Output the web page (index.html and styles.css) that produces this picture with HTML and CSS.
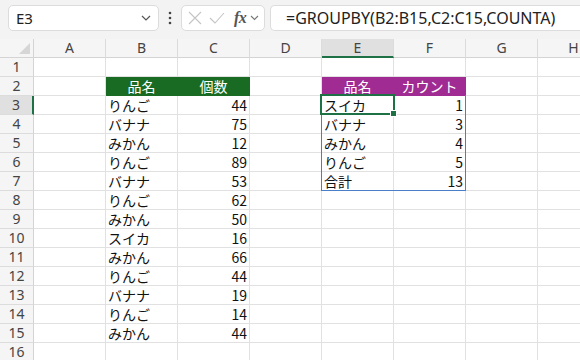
FILE: index.html
```html
<!DOCTYPE html>
<html lang="ja">
<head>
<meta charset="utf-8">
<link rel="stylesheet" href="styles.css">
</head>
<body>
<div class="app">
  <div class="toolbar">
    <div class="namebox"><span>E3</span>
      <svg class="chev" width="10" height="6" viewBox="0 0 10 6"><path d="M1 1 L5 5 L9 1" fill="none" stroke="#555" stroke-width="1.2"/></svg>
    </div>
    <div class="dots">
      <svg width="4" height="14" viewBox="0 0 4 14"><circle cx="2" cy="2" r="1.3" fill="#444"/><circle cx="2" cy="7" r="1.3" fill="#444"/><circle cx="2" cy="12" r="1.3" fill="#444"/></svg>
    </div>
    <div class="fbtns">
      <svg class="ic" width="14" height="14" viewBox="0 0 14 14"><path d="M1 1 L13 13 M13 1 L1 13" stroke="#c4c4c4" stroke-width="1.1" fill="none"/></svg>
      <svg class="ic" width="16" height="14" viewBox="0 0 16 14"><path d="M1 7 L6 12 L15 2" stroke="#c4c4c4" stroke-width="1.1" fill="none"/></svg>
      <span class="fx">fx</span>
      <svg class="chev2" width="9" height="6" viewBox="0 0 9 6"><path d="M1 1 L4.5 4.5 L8 1" fill="none" stroke="#777" stroke-width="1.1"/></svg>
    </div>
    <div class="formula">=GROUPBY(B2:B15,C2:C15,COUNTA)</div>
  </div>

  <div class="sheet">
    <div class="row hdr">
      <div class="rh corner"><span class="tri"></span></div>
      <div class="ch">A</div><div class="ch">B</div><div class="ch">C</div><div class="ch">D</div>
      <div class="ch sel">E</div><div class="ch">F</div><div class="ch">G</div><div class="ch">H</div>
    </div>
    <div class="row"><div class="rh">1</div><div class="c"></div><div class="c"></div><div class="c"></div><div class="c"></div><div class="c"></div><div class="c"></div><div class="c"></div><div class="c"></div></div>
    <div class="row"><div class="rh">2</div><div class="c"></div><div class="c g ctr">品名</div><div class="c g ctr">個数</div><div class="c"></div><div class="c p ctr">品名</div><div class="c p ctr">カウント</div><div class="c"></div><div class="c"></div></div>
    <div class="row"><div class="rh rsel">3</div><div class="c"></div><div class="c">りんご</div><div class="c n">44</div><div class="c"></div><div class="c">スイカ</div><div class="c n">1</div><div class="c"></div><div class="c"></div></div>
    <div class="row"><div class="rh">4</div><div class="c"></div><div class="c">バナナ</div><div class="c n">75</div><div class="c"></div><div class="c">バナナ</div><div class="c n">3</div><div class="c"></div><div class="c"></div></div>
    <div class="row"><div class="rh">5</div><div class="c"></div><div class="c">みかん</div><div class="c n">12</div><div class="c"></div><div class="c">みかん</div><div class="c n">4</div><div class="c"></div><div class="c"></div></div>
    <div class="row"><div class="rh">6</div><div class="c"></div><div class="c">りんご</div><div class="c n">89</div><div class="c"></div><div class="c">りんご</div><div class="c n">5</div><div class="c"></div><div class="c"></div></div>
    <div class="row"><div class="rh">7</div><div class="c"></div><div class="c">バナナ</div><div class="c n">53</div><div class="c"></div><div class="c">合計</div><div class="c n">13</div><div class="c"></div><div class="c"></div></div>
    <div class="row"><div class="rh">8</div><div class="c"></div><div class="c">りんご</div><div class="c n">62</div><div class="c"></div><div class="c"></div><div class="c"></div><div class="c"></div><div class="c"></div></div>
    <div class="row"><div class="rh">9</div><div class="c"></div><div class="c">みかん</div><div class="c n">50</div><div class="c"></div><div class="c"></div><div class="c"></div><div class="c"></div><div class="c"></div></div>
    <div class="row"><div class="rh">10</div><div class="c"></div><div class="c">スイカ</div><div class="c n">16</div><div class="c"></div><div class="c"></div><div class="c"></div><div class="c"></div><div class="c"></div></div>
    <div class="row"><div class="rh">11</div><div class="c"></div><div class="c">みかん</div><div class="c n">66</div><div class="c"></div><div class="c"></div><div class="c"></div><div class="c"></div><div class="c"></div></div>
    <div class="row"><div class="rh">12</div><div class="c"></div><div class="c">りんご</div><div class="c n">44</div><div class="c"></div><div class="c"></div><div class="c"></div><div class="c"></div><div class="c"></div></div>
    <div class="row"><div class="rh">13</div><div class="c"></div><div class="c">バナナ</div><div class="c n">19</div><div class="c"></div><div class="c"></div><div class="c"></div><div class="c"></div><div class="c"></div></div>
    <div class="row"><div class="rh">14</div><div class="c"></div><div class="c">りんご</div><div class="c n">14</div><div class="c"></div><div class="c"></div><div class="c"></div><div class="c"></div><div class="c"></div></div>
    <div class="row"><div class="rh">15</div><div class="c"></div><div class="c">みかん</div><div class="c n">44</div><div class="c"></div><div class="c"></div><div class="c"></div><div class="c"></div><div class="c"></div></div>
    <div class="row"><div class="rh">16</div><div class="c"></div><div class="c"></div><div class="c"></div><div class="c"></div><div class="c"></div><div class="c"></div><div class="c"></div><div class="c"></div></div>

    <div class="spill"></div>
    <div class="cursor"><span class="handle"></span></div>
  </div>
</div>
</body>
</html>
```

FILE: styles.css
```css
html, body {
  margin: 0;
  padding: 0;
  background: #ffffff;
}
.app {
  width: 580px;
  height: 360px;
  overflow: hidden;
  font-family: "Noto Sans", "Noto Sans CJK JP", sans-serif;
  color: #222;
}
.toolbar {
  height: 39px;
  box-sizing: border-box;
  background: #f3f3f3;
  display: flex;
  align-items: flex-start;
  padding: 5px 0 0 8px;
  white-space: nowrap;
}
.namebox {
  width: 151px;
  height: 26px;
  box-sizing: border-box;
  background: #fff;
  border: 1px solid #dcdcdc;
  border-radius: 5px;
  display: flex;
  align-items: center;
  justify-content: space-between;
  padding: 0 7px 0 7px;
  font-size: 15px;
  color: #222;
}
.dots {
  width: 22px;
  height: 26px;
  display: flex;
  align-items: center;
  justify-content: center;
}
.fbtns {
  width: 84px;
  height: 26px;
  box-sizing: border-box;
  background: #fff;
  border: 1px solid #dcdcdc;
  border-radius: 5px;
  display: flex;
  align-items: center;
  padding: 0 0 0 6px;
  gap: 7px;
}
.fx {
  font-family: "Liberation Serif", serif;
  font-style: italic;
  font-weight: bold;
  font-size: 16px;
  color: #555;
  margin-left: 2px;
  margin-right: -3px;
  letter-spacing: -0.5px;
}
.formula {
  flex: 1;
  margin-left: 5px;
  height: 26px;
  box-sizing: border-box;
  background: #fff;
  border: 1px solid #dcdcdc;
  border-right: none;
  border-radius: 5px 0 0 5px;
  padding-left: 15px;
  font-size: 16px;
  line-height: 24px;
  color: #222;
}
.sheet {
  position: relative;
}
.row {
  display: flex;
  height: 19px;
}
.rh {
  width: 34px;
  flex: none;
  box-sizing: border-box;
  background: #f5f5f5;
  border-right: 1px solid #d4d4d4;
  border-bottom: 1px solid #dcdcdc;
  font-size: 14px;
  line-height: 18px;
  text-align: center;
  color: #444;
}
.rh.rsel {
  background: #e0e0e0;
  border-right: 2px solid #1e7145;
}
.corner {
  position: relative;
  border-bottom: 1px solid #d4d4d4;
}
.tri {
  position: absolute;
  right: 3px;
  bottom: 3px;
  width: 0;
  height: 0;
  border-left: 11px solid transparent;
  border-bottom: 11px solid #d6d6d6;
}
.ch {
  width: 72px;
  flex: none;
  box-sizing: border-box;
  background: #f5f5f5;
  border-right: 1px solid #dcdcdc;
  border-bottom: 1px solid #d4d4d4;
  font-size: 14px;
  line-height: 18px;
  text-align: center;
  color: #444;
}
.ch.sel {
  background: #e0e0e0;
  border-bottom: 2px solid #1e7145;
}
.c {
  width: 72px;
  flex: none;
  box-sizing: border-box;
  border-right: 1px solid #e1e1e1;
  border-bottom: 1px solid #e1e1e1;
  font-family: "Noto Sans CJK JP", sans-serif;
  font-size: 14px;
  line-height: 18px;
  padding: 0 2px;
  overflow: hidden;
  white-space: nowrap;
  color: #111;
}
.c.n {
  text-align: right;
}
.c.ctr {
  text-align: center;
  color: #fff;
}
.c.g {
  background: #196b24;
  border-color: #196b24;
}
.c.p {
  background: #a02b93;
  border-color: #a02b93;
}
.spill {
  position: absolute;
  left: 321px;
  top: 56px;
  width: 145px;
  height: 96px;
  box-sizing: border-box;
  border: 1px solid #4a7ec8;
  border-top: none;
}
.cursor {
  position: absolute;
  left: 320px;
  top: 55px;
  width: 75px;
  height: 21px;
  box-sizing: border-box;
  border: 2px solid #1e7145;
}
.handle {
  position: absolute;
  right: -4px;
  bottom: -4px;
  width: 5px;
  height: 5px;
  background: #1e7145;
  border: 1px solid #fff;
}
```
